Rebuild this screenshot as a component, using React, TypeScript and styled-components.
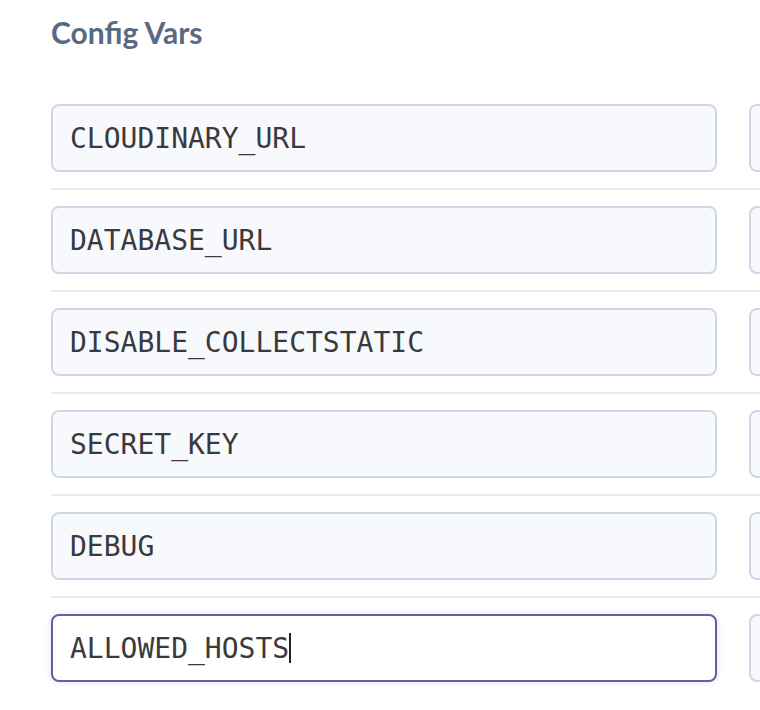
import React from "react";
import styled, { createGlobalStyle } from "styled-components";

const Global = createGlobalStyle`
  html, body { margin: 0; padding: 0; background: #ffffff; }
  body { overflow: hidden; }
`;

const Page = styled.div`
  width: 760px;
  height: 710px;
  overflow: hidden;
  padding-left: 51px;
  box-sizing: border-box;
`;

const Heading = styled.h2`
  margin: 0;
  padding-top: 13px;
  font-family: Lato, "Open Sans", sans-serif;
  font-weight: 700;
  font-size: 30px;
  line-height: 38px;
  color: #596981;
  letter-spacing: 0;
`;

const List = styled.div`
  margin-top: 37px;
  display: flex;
  flex-direction: column;
`;

const Row = styled.div<{ $last?: boolean }>`
  display: flex;
  gap: 32px;
  padding: 16px 0;
  border-bottom: ${(p) => (p.$last ? "none" : "2px solid #e7ebf1")};
  width: 1400px;
`;

const Field = styled.div<{ $focused?: boolean; $width: number }>`
  flex: 0 0 ${(p) => p.$width}px;
  height: 68px;
  box-sizing: border-box;
  border: 2px solid ${(p) => (p.$focused ? "#7257a2" : "#cfd7e6")};
  border-radius: 8px;
  background: ${(p) => (p.$focused ? "#ffffff" : "#f8f9fc")};
  box-shadow: ${(p) =>
    p.$focused ? "0 0 4px 2px rgba(114, 87, 162, 0.12)" : "none"};
  display: flex;
  align-items: center;
  padding-left: 17px;
  font-family: "DejaVu Sans Mono", "Liberation Mono", monospace;
  font-size: 28px;
  color: #3a3a3c;
`;

const Caret = styled.span`
  display: inline-block;
  width: 2px;
  height: 30px;
  background: #222;
  vertical-align: middle;
`;

const keys = [
  "CLOUDINARY_URL",
  "DATABASE_URL",
  "DISABLE_COLLECTSTATIC",
  "SECRET_KEY",
  "DEBUG",
  "ALLOWED_HOSTS",
];

export default function App() {
  return (
    <Page>
      <Global />
      <Heading>Config Vars</Heading>
      <List>
        {keys.map((k, i) => {
          const last = i === keys.length - 1;
          return (
            <Row key={k} $last={last}>
              <Field $width={666} $focused={last}>
                {k}
                {last && <Caret />}
              </Field>
              <Field $width={600} />
            </Row>
          );
        })}
      </List>
    </Page>
  );
}
